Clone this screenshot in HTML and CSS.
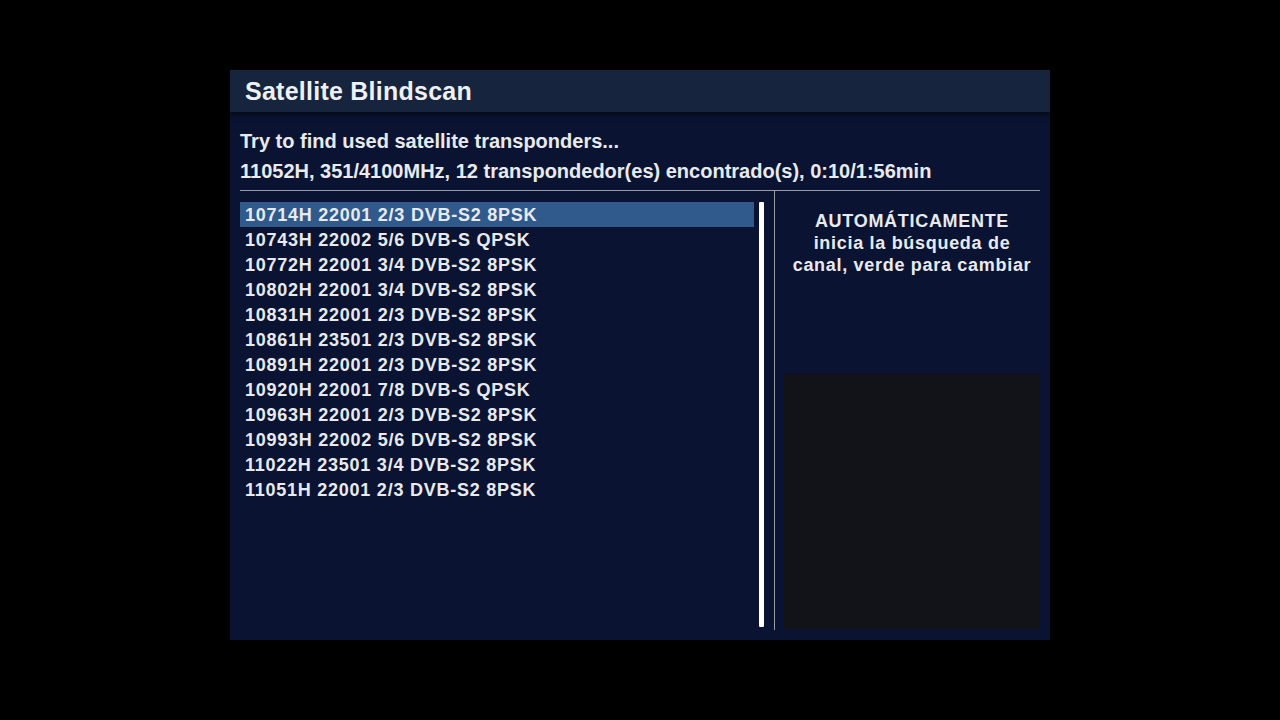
FILE: index.html
```html
<!DOCTYPE html>
<html>
<head>
<meta charset="utf-8">
<link rel="stylesheet" href="styles.css">
</head>
<body>
<div class="screen">
  <div class="panel">
    <div class="header">Satellite Blindscan</div>
    <div class="content">
      <div class="info">Try to find used satellite transponders...</div>
      <div class="info">11052H, 351/4100MHz, 12 transpondedor(es) encontrado(s), 0:10/1:56min</div>
      <div class="sep"></div>
      <div class="main">
        <div class="list">
          <div class="row sel">10714H 22001 2/3 DVB-S2 8PSK</div>
          <div class="row">10743H 22002 5/6 DVB-S QPSK</div>
          <div class="row">10772H 22001 3/4 DVB-S2 8PSK</div>
          <div class="row">10802H 22001 3/4 DVB-S2 8PSK</div>
          <div class="row">10831H 22001 2/3 DVB-S2 8PSK</div>
          <div class="row">10861H 23501 2/3 DVB-S2 8PSK</div>
          <div class="row">10891H 22001 2/3 DVB-S2 8PSK</div>
          <div class="row">10920H 22001 7/8 DVB-S QPSK</div>
          <div class="row">10963H 22001 2/3 DVB-S2 8PSK</div>
          <div class="row">10993H 22002 5/6 DVB-S2 8PSK</div>
          <div class="row">11022H 23501 3/4 DVB-S2 8PSK</div>
          <div class="row">11051H 22001 2/3 DVB-S2 8PSK</div>
        </div>
        <div class="scrollbar"></div>
        <div class="vline"></div>
        <div class="side">
          <div class="hint">AUTOMÁTICAMENTE<br>inicia la búsqueda de<br>canal, verde para cambiar</div>
          <div class="preview"></div>
        </div>
      </div>
    </div>
  </div>
</div>
</body>
</html>
```
FILE: styles.css
```css
html, body {
  margin: 0;
  padding: 0;
  background: #000;
}
.screen {
  width: 1280px;
  height: 720px;
  padding-top: 70px;
  box-sizing: border-box;
  display: flex;
  justify-content: center;
  align-items: flex-start;
  font-family: "Liberation Sans", Arial, sans-serif;
  font-weight: bold;
  color: #e8eaf0;
}
.panel {
  width: 820px;
  height: 570px;
  background: #0a1432;
  display: flex;
  flex-direction: column;
}
.header {
  height: 42px;
  line-height: 42px;
  padding-left: 15px;
  font-size: 25px;
  letter-spacing: 0.25px;
  background: #16243d;
  color: #eef0f4;
  box-shadow: 0 3px 5px rgba(0, 0, 0, 0.55);
  position: relative;
  z-index: 1;
}
.content {
  flex: 1;
  padding: 14px 10px 10px 10px;
  display: flex;
  flex-direction: column;
}
.info {
  font-size: 20px;
  line-height: 30px;
  white-space: nowrap;
}
.sep {
  height: 1px;
  background: #9a9ca4;
  margin-top: 4px;
}
.main {
  flex: 1;
  display: flex;
}
.list {
  width: 514px;
  padding-top: 11px;
}
.row {
  height: 25px;
  line-height: 27px;
  padding-left: 5px;
  font-size: 18px;
  letter-spacing: 0.75px;
  white-space: nowrap;
}
.row.sel {
  background: #305a8c;
}
.scrollbar {
  width: 5px;
  margin-left: 5px;
  margin-top: 11px;
  margin-bottom: 3px;
  background: #ffffff;
  border-radius: 1px;
}
.vline {
  width: 1px;
  margin-left: 10px;
  background: #9a9ca4;
}
.side {
  flex: 1;
  display: flex;
  flex-direction: column;
  padding-left: 9px;
}
.hint {
  padding-top: 19px;
  text-align: center;
  font-size: 18px;
  line-height: 22px;
  letter-spacing: 0.7px;
}
.preview {
  margin-top: auto;
  height: 255px;
  margin-bottom: 1px;
  background: #111318;
}
```
